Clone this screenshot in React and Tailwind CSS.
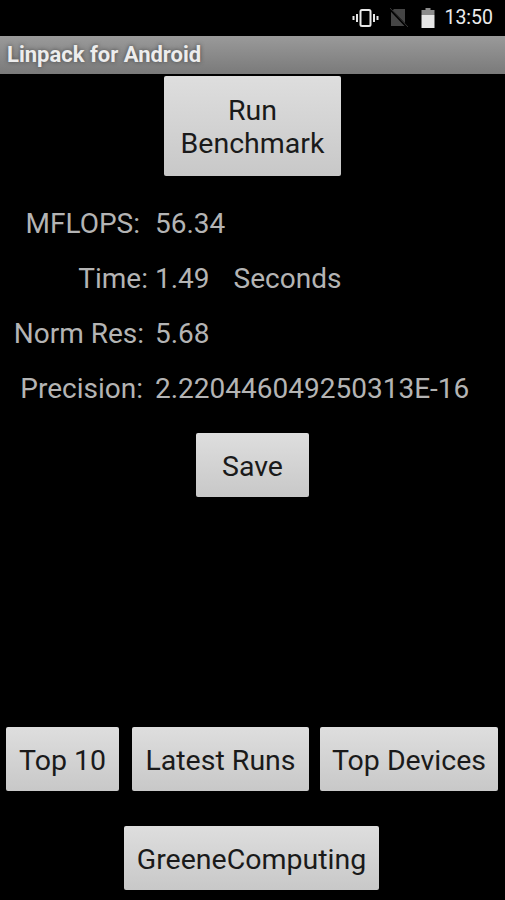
import React from "react";

const font = { fontFamily: "Roboto, sans-serif" };

function Btn({ className = "", children }) {
  return (
    <button className={"flex items-center justify-center rounded-[2px] bg-gradient-to-b from-[#dedede] to-[#c8c8c8] pt-[2px] text-[28.5px] leading-[33px] text-[#1a1a1a] " + className}>
      {children}
    </button>
  );
}

function Row({ label, pad, value, extra }) {
  return (
    <div className="flex h-[55px] items-center text-[28px] text-[#b4b4b4]">
      <div className={"w-[155px] text-right whitespace-nowrap " + pad}>{label}</div>
      <div className="whitespace-nowrap">{value}</div>
      {extra && <div className="ml-[24px] whitespace-nowrap">{extra}</div>}
    </div>
  );
}

export default function App() {
  return (
    <div className="flex h-[900px] w-[505px] flex-col overflow-hidden bg-black" style={font}>
      {/* status bar */}
      <div className="flex h-[36px] items-center justify-end pr-[12px]">
        <svg width="27" height="22" viewBox="0 0 26 22" className="mr-[9px]" fill="none" stroke="#e8e8e8">
          <rect x="8" y="3" width="10" height="16" rx="1.5" strokeWidth="2" />
          <path d="M4.5 7v8M21.5 7v8" strokeWidth="2" />
          <path d="M1 9v4M25 9v4" strokeWidth="2" />
        </svg>
        <svg width="20" height="22" viewBox="0 0 20 22" className="mr-[13px]">
          <path d="M6 2h11v17H3V5z" fill="#454545" />
          <path d="M1 1l18 19" stroke="#000" strokeWidth="2.5" />
          <path d="M2 1l18 19" stroke="#333" strokeWidth="1" />
        </svg>
        <svg width="14" height="22" viewBox="0 0 14 22" className="mr-[9px]">
          <path d="M4.5 1h5v2h4v5H.5V3h4z" fill="#8c8c8c" />
          <path d="M.5 8h13v13H.5z" fill="#e6e6e6" />
        </svg>
        <span className="text-[19.5px] leading-none text-[#ececec]">13:50</span>
      </div>

      {/* title bar */}
      <div className="flex h-[38px] items-center bg-gradient-to-b from-[#9a9a9a] to-[#7a7a7a] pb-[2px] pl-[7px]">
        <span className="text-[22px] font-bold text-[#ededed] [text-shadow:0_0_4px_#444]">Linpack for Android</span>
      </div>

      <div className="flex flex-col items-center pt-[2px]">
        <Btn className="h-[100px] w-[177px] text-center">
          Run
          <br />
          Benchmark
        </Btn>
      </div>

      <div className="mt-[20px] flex flex-col">
        <Row label="MFLOPS:" pad="pr-[15px]" value="56.34" />
        <Row label="Time:" pad="pr-[7px]" value="1.49" extra="Seconds" />
        <Row label="Norm Res:" pad="pr-[11px]" value="5.68" />
        <Row label="Precision:" pad="pr-[12px]" value="2.220446049250313E-16" />
      </div>

      <div className="mt-[17px] flex justify-center">
        <Btn className="h-[64px] w-[113px]">Save</Btn>
      </div>

      <div className="mt-[230px] flex pl-[6px]">
        <Btn className="h-[64px] w-[113px]">Top 10</Btn>
        <Btn className="ml-[13px] h-[64px] w-[177px]">Latest Runs</Btn>
        <Btn className="ml-[11px] h-[64px] w-[178px]">Top Devices</Btn>
      </div>

      <div className="mt-[35px] flex pl-[124px]">
        <Btn className="h-[64px] w-[255px]">GreeneComputing</Btn>
      </div>
    </div>
  );
}
